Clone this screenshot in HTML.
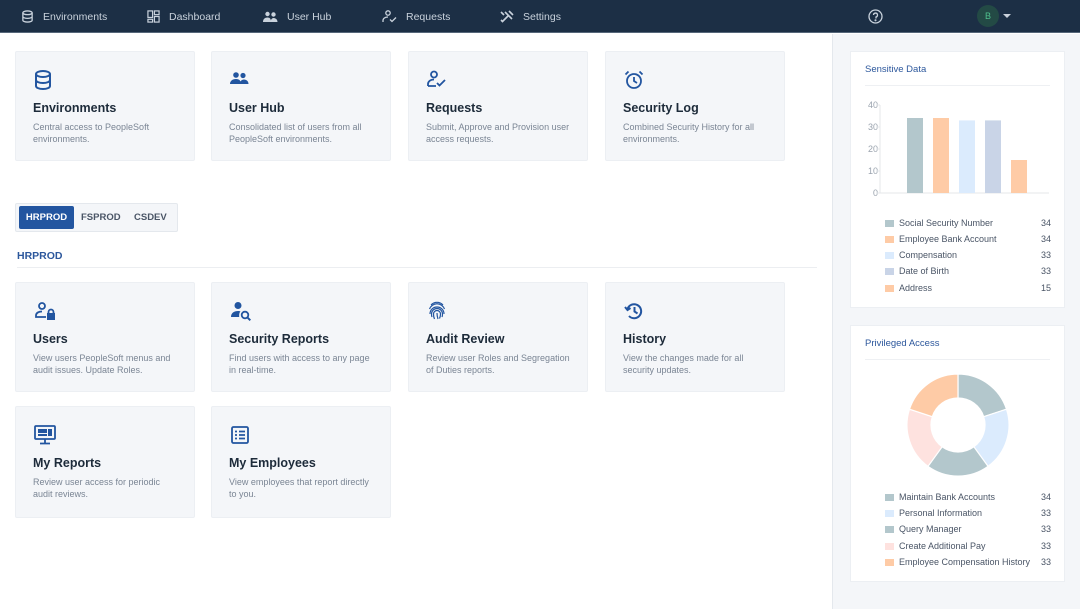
<!DOCTYPE html>
<html><head><meta charset="utf-8"><style>
*{box-sizing:border-box;margin:0;padding:0}
body{width:1080px;height:609px;overflow:hidden;font-family:"Liberation Sans",sans-serif;background:#fff;position:relative}
.nav{position:absolute;left:0;top:0;width:1080px;height:33px;background:#1c2f45;border-bottom:1px solid #56677a}
.ni{position:absolute;top:0;height:33px;display:flex;align-items:center;color:#c9d2dc;font-size:10.5px}
.ni svg{margin-right:9px}
.side{position:absolute;left:832px;top:34px;width:248px;height:575px;background:#f4f6f9;border-left:1px solid #e4e8ed}
.card{position:absolute;width:180px;background:#f4f6f9;border:1px solid #eceff3;border-radius:2px}
.card svg{position:absolute;left:18px;top:18px}
.card h3{position:absolute;left:17px;font-size:12.5px;font-weight:bold;color:#1d2b3a}
.card p{position:absolute;left:17px;width:146px;font-size:9px;line-height:12px;color:#7a8594}
.pan{position:absolute;left:850px;width:215px;background:#fff;border:1px solid #eceff3}
.pan h4{position:absolute;left:14px;top:12px;font-size:9.5px;color:#2c579c;font-weight:normal}
.pan .hr{position:absolute;left:14px;right:14px;top:33px;border-top:1px solid #eef0f3}
.lg{position:absolute;left:34px;width:166px;font-size:9px;color:#4a5566;height:12px}
.lg i{position:absolute;left:0;top:2px;width:9px;height:7px}
.lg span{position:absolute;left:14px;top:0}
.lg b{position:absolute;right:0;top:0;font-weight:normal}
</style></head><body>
<div class="nav">
<div class="ni" style="left:21px"><svg width="13" height="13" viewBox="0 0 14 14" fill="none" stroke="#c9d2dc" stroke-width="1.4"><ellipse cx="7" cy="3" rx="5" ry="2"/><path d="M2 3v8c0 1.1 2.2 2 5 2s5-.9 5-2V3M2 7c0 1.1 2.2 2 5 2s5-.9 5-2"/></svg>Environments</div>
<div class="ni" style="left:147px"><svg width="13" height="13" viewBox="0 0 14 14" fill="none" stroke="#c9d2dc" stroke-width="1.3"><rect x="1" y="1" width="5" height="7"/><rect x="8" y="1" width="5" height="4"/><rect x="1" y="10" width="5" height="3"/><rect x="8" y="7" width="5" height="6"/></svg>Dashboard</div>
<div class="ni" style="left:263px"><svg width="15" height="12" viewBox="0 0 15 12" fill="#c9d2dc"><circle cx="4.5" cy="3" r="2.2"/><circle cx="10.5" cy="3.5" r="2.2"/><path d="M0 11c0-3 2-4.5 4.5-4.5S8 8 8 11zM7.5 11c.3-2.5 1.5-4 3-4s4 1 4 4z"/></svg>User Hub</div>
<div class="ni" style="left:382px"><svg width="15" height="13" viewBox="0 0 15 13" fill="none" stroke="#c9d2dc" stroke-width="1.3"><circle cx="6" cy="3" r="2.2"/><path d="M1 12V10.5c0-2 2-3.5 5-3.5M8 9.5l2 2 4-4"/></svg>Requests</div>
<div class="ni" style="left:500px"><svg width="14" height="14" viewBox="0 0 14 14" fill="none" stroke="#c9d2dc" stroke-width="1.6"><path d="M2 12l6-6M5 2l7 7M9 1l4 4M1 2l3 3M3 12l-2-2"/></svg>Settings</div>
<svg style="position:absolute;left:868px;top:9px" width="15" height="15" viewBox="0 0 15 15" fill="none" stroke="#c9d2dc" stroke-width="1.3"><circle cx="7.5" cy="7.5" r="6.5"/><path d="M5.5 6a2 2 0 1 1 2.5 2v1.5"/><circle cx="7.5" cy="11.3" r=".4" fill="#c9d2dc"/></svg>
<div style="position:absolute;left:977px;top:5px;width:22px;height:22px;border-radius:50%;background:#234a45;color:#4fc08d;font-size:9px;text-align:center;line-height:22px">B</div>
<div style="position:absolute;left:1003px;top:14px;border:4px solid transparent;border-top:4px solid #c9d2dc;border-bottom:0"></div>
</div>
<div class="side"></div>

<div class="card" style="left:15px;top:51px;height:110px"><svg width="18" height="20" viewBox="0 0 18 20" fill="none" stroke="#2255a0" stroke-width="2"><ellipse cx="9" cy="4" rx="7" ry="3"/><path d="M2 4v12c0 1.7 3 3 7 3s7-1.3 7-3V4M2 10c0 1.7 3 3 7 3s7-1.3 7-3"/></svg><h3 style="top:49px">Environments</h3><p style="top:69px">Central access to PeopleSoft environments.</p></div>
<div class="card" style="left:211px;top:51px;height:110px"><svg width="20" height="16" viewBox="0 0 20 16" fill="#2255a0"><circle cx="6" cy="5" r="2.8"/><circle cx="13" cy="5.5" r="2.6"/><path d="M0 14c0-3 2.5-5 6-5s5 2 5 5zM10 14c0-2.7 1.5-4.5 4-4.5s4.5 1.8 4.5 4.5z"/></svg><h3 style="top:49px">User Hub</h3><p style="top:69px;width:160px">Consolidated list of users from all PeopleSoft environments.</p></div>
<div class="card" style="left:408px;top:51px;height:110px"><svg width="20" height="18" viewBox="0 0 20 18" fill="none" stroke="#2255a0" stroke-width="1.8"><circle cx="7" cy="4.5" r="3"/><path d="M1 16v-2c0-2.5 2.5-4.5 6-4.5M9 16H1M10 13l2.5 2.5L18 10"/></svg><h3 style="top:49px">Requests</h3><p style="top:69px;width:160px">Submit, Approve and Provision user access requests.</p></div>
<div class="card" style="left:605px;top:51px;height:110px"><svg width="20" height="20" viewBox="0 0 20 20" fill="none" stroke="#2255a0" stroke-width="1.8"><circle cx="10" cy="11" r="7"/><path d="M10 7v4l3 2M1.5 4.5l3-3M18.5 4.5l-3-3"/></svg><h3 style="top:49px">Security Log</h3><p style="top:69px;width:160px">Combined Security History for all environments.</p></div>

<div style="position:absolute;left:15px;top:203px;width:163px;height:29px;background:#f4f6f9;border:1px solid #e4e8ed;border-radius:2px"></div>
<div style="position:absolute;left:19px;top:206px;width:55px;height:23px;background:#2255a0;border-radius:2px;color:#fff;font-size:9.5px;font-weight:bold;text-align:center;line-height:23px">HRPROD</div>
<div style="position:absolute;left:81px;top:206px;font-size:9.5px;font-weight:bold;color:#4a5566;line-height:23px">FSPROD</div>
<div style="position:absolute;left:134px;top:206px;font-size:9.5px;font-weight:bold;color:#4a5566;line-height:23px">CSDEV</div>
<div style="position:absolute;left:17px;top:250px;font-size:10.5px;font-weight:bold;color:#2c579c">HRPROD</div>
<div style="position:absolute;left:17px;top:267px;width:800px;border-top:1px solid #eceef1"></div>

<div class="card" style="left:15px;top:282px;height:110px"><svg width="22" height="20" viewBox="0 0 22 20" fill="none" stroke="#2255a0" stroke-width="1.8"><circle cx="8" cy="5" r="3"/><path d="M12 16H2v-1.5C2 12 4.5 10.5 8 10.5"/><rect x="13" y="12" width="8" height="7" fill="#2255a0" stroke="none"/><path d="M14.5 12.5v-1.5a2.5 2.5 0 0 1 5 0v1.5"/></svg><h3 style="top:49px">Users</h3><p style="top:69px;width:150px">View users PeopleSoft menus and audit issues. Update Roles.</p></div>
<div class="card" style="left:211px;top:282px;height:110px"><svg width="22" height="20" viewBox="0 0 22 20" fill="#2255a0"><circle cx="8" cy="4.5" r="3.5"/><path d="M1 16c0-4 3-6 7-6 1 0 2 .2 2.5.4-1 1-1.5 2.5-1.3 5.6z"/><circle cx="15" cy="14" r="3.3" fill="none" stroke="#2255a0" stroke-width="1.8"/><path d="M17.3 16.3l3 3" stroke="#2255a0" stroke-width="2"/></svg><h3 style="top:49px">Security Reports</h3><p style="top:69px;width:150px">Find users with access to any page in real-time.</p></div>
<div class="card" style="left:408px;top:282px;height:110px"><svg width="20" height="20" viewBox="0 0 20 20" fill="none" stroke="#2255a0" stroke-width="1.2"><path d="M4 4a8 8 0 0 1 12 0M2.5 8a8 8 0 0 1 15 0M3 13c0-4 3-7 7-7s7 3 7 7M5 16c-.5-1-.5-2-.5-3a5.5 5.5 0 0 1 11 0c0 1 0 2-.5 3M7.5 18c-.7-1.5-1-3-1-5a3.5 3.5 0 0 1 7 0c0 1.5-.3 3-1 4.5M10 12c0 2.5.5 4.5 1 6"/></svg><h3 style="top:49px">Audit Review</h3><p style="top:69px;width:150px">Review user Roles and Segregation of Duties reports.</p></div>
<div class="card" style="left:605px;top:282px;height:110px"><svg width="20" height="20" viewBox="0 0 20 20" fill="none" stroke="#2255a0" stroke-width="2"><path d="M3.5 8A7 7 0 1 1 5 15"/><path d="M1 6l2.5 3L6.5 7" /><path d="M10.5 6v4.5l3 2"/></svg><h3 style="top:49px">History</h3><p style="top:69px;width:150px">View the changes made for all security updates.</p></div>

<div class="card" style="left:15px;top:406px;height:112px"><svg width="22" height="20" viewBox="0 0 22 20" fill="none" stroke="#2255a0" stroke-width="1.8"><rect x="1" y="1" width="20" height="13" rx="1"/><rect x="4" y="4" width="9" height="4" fill="#2255a0" stroke="none"/><rect x="14" y="4" width="4" height="7" fill="#2255a0" stroke="none"/><rect x="4" y="9" width="9" height="2" fill="#2255a0" stroke="none"/><path d="M11 14v4M6 18.5h10"/></svg><h3 style="top:49px">My Reports</h3><p style="top:69px;width:140px">Review user access for periodic audit reviews.</p></div>
<div class="card" style="left:211px;top:406px;height:112px"><svg width="20" height="20" viewBox="0 0 20 20" fill="none" stroke="#2255a0" stroke-width="1.8"><rect x="2" y="2" width="16" height="16" rx="1.5"/><path d="M5 6.5h2M9 6.5h6M5 10h2M9 10h6M5 13.5h2M9 13.5h6"/></svg><h3 style="top:49px">My Employees</h3><p style="top:69px;width:148px">View employees that report directly to you.</p></div>

<div class="pan" style="top:51px;height:257px"><h4>Sensitive Data</h4><div class="hr"></div></div>
<svg style="position:absolute;left:850px;top:95px" width="215" height="105" font-family="Liberation Sans" font-size="9" fill="#9aa3ae">
<text x="28" y="13" text-anchor="end">40</text><text x="28" y="35" text-anchor="end">30</text><text x="28" y="57" text-anchor="end">20</text><text x="28" y="79" text-anchor="end">10</text><text x="28" y="101" text-anchor="end">0</text>
<path d="M30 10v88M30 98h169M27 10h3M27 32h3M27 54h3M27 76h3M27 98h3" stroke="#e4e7ea" stroke-width="1"/>
<rect x="57" y="23" width="16" height="75" fill="#b3c7cc"/>
<rect x="83" y="23" width="16" height="75" fill="#fecba6"/>
<rect x="109" y="25.4" width="16" height="72.6" fill="#dbebfd"/>
<rect x="135" y="25.4" width="16" height="72.6" fill="#c9d4e7"/>
<rect x="161" y="65" width="16" height="33" fill="#fecba6"/>
</svg>
<div class="lg" style="left:885px;top:218px"><i style="background:#b3c7cc"></i><span>Social Security Number</span><b>34</b></div>
<div class="lg" style="left:885px;top:234px"><i style="background:#fecba6"></i><span>Employee Bank Account</span><b>34</b></div>
<div class="lg" style="left:885px;top:250px"><i style="background:#dbebfd"></i><span>Compensation</span><b>33</b></div>
<div class="lg" style="left:885px;top:266px"><i style="background:#c9d4e7"></i><span>Date of Birth</span><b>33</b></div>
<div class="lg" style="left:885px;top:283px"><i style="background:#fecba6"></i><span>Address</span><b>15</b></div>

<div class="pan" style="top:325px;height:257px"><h4>Privileged Access</h4><div class="hr"></div></div>
<svg style="position:absolute;left:898px;top:365px" width="120" height="120" viewBox="-60 -60 120 120">
<g stroke="#fff" stroke-width="1.2">
<path d="M0 -51A51 51 0 0 1 48.5 -15.8L25.7 -8.3A27 27 0 0 0 0 -27Z" fill="#b3c7cc"/>
<path d="M48.5 -15.8A51 51 0 0 1 30 41.3L15.9 21.8A27 27 0 0 0 25.7 -8.3Z" fill="#dbebfd"/>
<path d="M30 41.3A51 51 0 0 1 -30 41.3L-15.9 21.8A27 27 0 0 0 15.9 21.8Z" fill="#b3c7cc"/>
<path d="M-30 41.3A51 51 0 0 1 -48.5 -15.8L-25.7 -8.3A27 27 0 0 0 -15.9 21.8Z" fill="#fee2df"/>
<path d="M-48.5 -15.8A51 51 0 0 1 0 -51L0 -27A27 27 0 0 0 -25.7 -8.3Z" fill="#fecba6"/>
</g></svg>
<div class="lg" style="left:885px;top:492px"><i style="background:#b3c7cc"></i><span>Maintain Bank Accounts</span><b>34</b></div>
<div class="lg" style="left:885px;top:508px"><i style="background:#dbebfd"></i><span>Personal Information</span><b>33</b></div>
<div class="lg" style="left:885px;top:524px"><i style="background:#b3c7cc"></i><span>Query Manager</span><b>33</b></div>
<div class="lg" style="left:885px;top:541px"><i style="background:#fee2df"></i><span>Create Additional Pay</span><b>33</b></div>
<div class="lg" style="left:885px;top:557px"><i style="background:#fecba6"></i><span>Employee Compensation History</span><b>33</b></div>
</body></html>
